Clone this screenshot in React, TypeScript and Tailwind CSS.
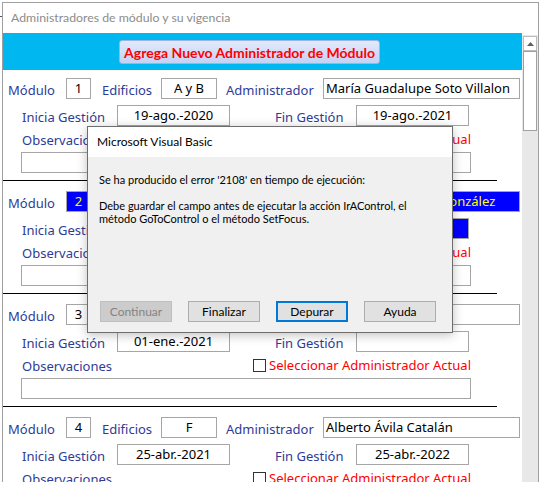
import React from "react";

type Rec = {
  mod: string;
  ed: string;
  admin: string;
  ini: string;
  fin: string;
  hl?: boolean;
};

const records: Rec[] = [
  { mod: "1", ed: "A y B", admin: "María Guadalupe Soto Villalon", ini: "19-ago.-2020", fin: "19-ago.-2021" },
  { mod: "2", ed: "C", admin: "María Elena Rubio González", ini: "01-sep.-2020", fin: "01-sep.-2021", hl: true },
  { mod: "3", ed: "", admin: "", ini: "01-ene.-2021", fin: "" },
  { mod: "4", ed: "F", admin: "Alberto Ávila Catalán", ini: "25-abr.-2021", fin: "25-abr.-2022" },
];

const font = "font-['Noto_Sans','Open_Sans',sans-serif]";
const lato = "font-['Lato','Noto_Sans',sans-serif]";

function Label({ children }: { children: React.ReactNode }) {
  return <span className="text-[13px] leading-none text-[#2e3b97] whitespace-nowrap">{children}</span>;
}

function Field({ value, w, hl, center }: { value: string; w: string; hl?: boolean; center?: boolean }) {
  return (
    <div
      className={`${w} h-[21px] shrink-0 border border-[#a6a6a6] flex items-center overflow-hidden whitespace-nowrap text-[13px] leading-none ${
        hl ? "bg-[#0000ff] text-[#ffff00]" : "bg-white text-black"
      } ${center ? "justify-center" : "pl-[2px]"}`}
    >
      {value}
    </div>
  );
}

function Record({ r, first }: { r: Rec; first?: boolean }) {
  return (
    <div className={`w-[519px] shrink-0 ${first ? "pt-[8px]" : "pt-[10px]"}`}>
      {/* Módulo / Edificios / Administrador */}
      <div className="flex items-center h-[21px]">
        <div className="w-[63px] shrink-0 pl-[5px]"><Label>Módulo</Label></div>
        <Field value={r.mod} w="w-[25px]" hl={r.hl} center />
        <div className="w-[70px] shrink-0 pl-[11px]"><Label>Edificios</Label></div>
        <Field value={r.ed} w="w-[56px]" hl={r.hl} center />
        <div className="w-[106px] shrink-0 pl-[9px]"><Label>Administrador</Label></div>
        <Field value={r.admin} w="w-[197px]" hl={r.hl} />
      </div>
      {/* Gestión */}
      <div className="flex items-center h-[21px] mt-[6px]">
        <div className="w-[114px] shrink-0 pl-[19px]"><Label>Inicia Gestión</Label></div>
        <Field value={r.ini} w="w-[113px]" hl={r.hl} center />
        <div className="w-[126px] shrink-0 pl-[45px]"><Label>Fin Gestión</Label></div>
        <Field value={r.fin} w="w-[113px]" hl={r.hl} center />
      </div>
      {/* Observaciones */}
      <div className="flex items-center h-[26px]">
        <div className="w-[250px] shrink-0 pl-[19px]"><Label>Observaciones</Label></div>
        <div className="w-[13px] h-[13px] shrink-0 border border-[#333] bg-white" />
        <span className="ml-[3px] text-[13px] leading-none text-[#ff0000] whitespace-nowrap">
          Seleccionar Administrador Actual
        </span>
      </div>
      <div className="ml-[18px] w-[450px] h-[21px] border border-[#a6a6a6] bg-white" />
      <div className="mt-[7px] w-[494px] h-px bg-black" />
    </div>
  );
}

function Scrollbar() {
  return (
    <div className="w-[16px] mt-[2px] flex-1 bg-[#e8e8e8] flex flex-col items-center pt-[1px]">
      <div className="w-[14px] h-[15px] bg-white border border-[#bcbcbc] flex items-center justify-center">
        <svg width="7" height="4" viewBox="0 0 7 4">
          <path d="M0 4 L3.5 0 L7 4 Z" fill="#606060" />
        </svg>
      </div>
      <div className="w-[14px] h-[80px] bg-white border border-[#a0a0a0]" />
    </div>
  );
}

function Dialog() {
  const btn =
    "w-[72px] h-[21px] flex items-center justify-center text-[12px] leading-none border";
  return (
    <div className={`absolute left-[87px] top-[126px] w-[366px] h-[207px] border border-[#6d6d6d] bg-[#f0f0f0] shadow-[0_2px_10px_rgba(0,0,0,0.25)] flex flex-col ${lato}`}>
      <div className="h-[30px] bg-white flex items-center pl-[9px] text-[12px] text-black">Microsoft Visual Basic</div>
      <div className="flex-1 pl-[11px] pt-[16px] text-[11px] leading-[13px] text-black">
        <p>Se ha producido el error '2108' en tiempo de ejecución:</p>
        <p className="mt-[13px]">Debe guardar el campo antes de ejecutar la acción IrAControl, el</p>
        <p>método GoToControl o el método SetFocus.</p>
      </div>
      <div className="flex gap-[16px] pl-[12px] pb-[10px]">
        <div className={`${btn} bg-[#cccccc] border-[#bfbfbf] text-[#838383]`}>Continuar</div>
        <div className={`${btn} bg-[#e1e1e1] border-[#adadad] text-black`}>Finalizar</div>
        <div className={`${btn} bg-[#e1e1e1] border-2 border-[#0078d7] text-black`}>Depurar</div>
        <div className={`${btn} bg-[#e1e1e1] border-[#adadad] text-black`}>Ayuda</div>
      </div>
    </div>
  );
}

export default function App() {
  return (
    <div className={`w-[540px] h-[482px] bg-white relative overflow-hidden ${font}`}>
      <div className="absolute left-0 top-[16px] w-[2px] h-px bg-[#555]" />
      <div className="mt-[2px] ml-[2px] w-[537px] h-[480px] border-l border-t border-r border-[#a0a0a0] flex flex-col">
        <div className={`h-[30px] flex items-center pl-[8px] text-[12.3px] text-[#8c8c8c] ${lato}`}>
          Administradores de módulo y su vigencia
        </div>
        <div className="flex flex-1 min-h-0">
          <div className="w-[519px] flex flex-col overflow-hidden">
            <div className="h-[37px] shrink-0 bg-[#00b7ef] pt-[7px] pl-[116px]">
              <div className={`w-[261px] h-[24px] rounded-[3px] border border-[#9fb3e3] bg-gradient-to-b from-[#e2e9fb] to-[#c4d2f4] flex items-center justify-center text-[14px] font-bold text-[#ff0000] whitespace-nowrap ${lato}`}>
                Agrega Nuevo Administrador de Módulo
              </div>
            </div>
            {records.map((r, i) => (
              <Record key={i} r={r} first={i === 0} />
            ))}
          </div>
          <Scrollbar />
        </div>
      </div>
      <Dialog />
    </div>
  );
}
